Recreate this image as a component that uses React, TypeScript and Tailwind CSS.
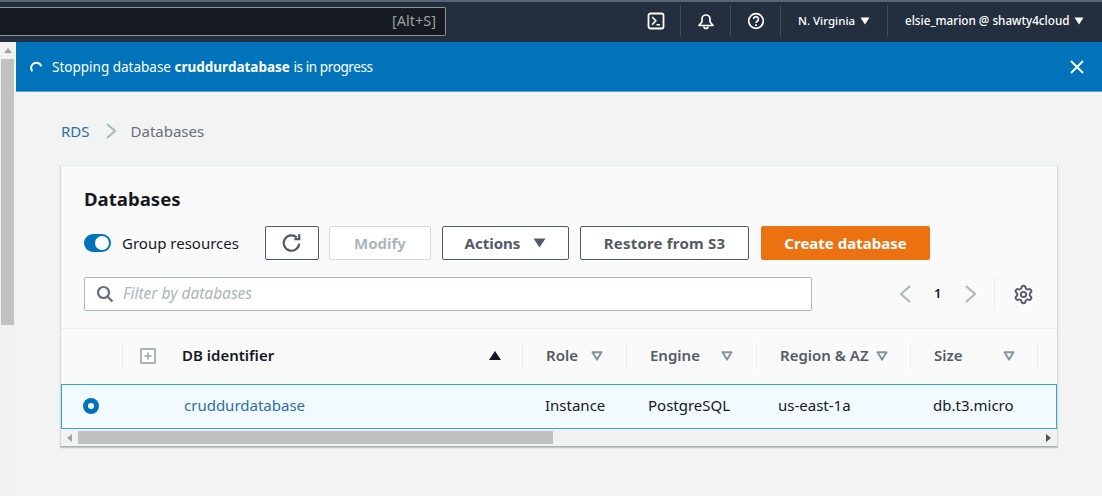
import React from "react";
import { Settings } from "lucide-react";

const font = { fontFamily: '"Noto Sans", "Open Sans", sans-serif' };

function Filter() {
  return (
    <svg width="12" height="10" viewBox="0 0 12 10" className="shrink-0">
      <path d="M1.5 1.2h9L6 8.6z" fill="none" stroke="#879596" strokeWidth="2" strokeLinejoin="round" />
    </svg>
  );
}

function HeaderCell({ label, w, gap }: { label: string; w: string; gap: string }) {
  return (
    <div className={`${w} flex h-[26px] shrink-0 items-center border-l border-[#eaeded] pl-[23px]`}>
      <span className="text-[15px] font-semibold text-[#545b64]">{label}</span>
      <span className={gap}><Filter /></span>
    </div>
  );
}

function Sep() {
  return <div className="h-[32px] w-px bg-[#414d5c]" />;
}

function Caret({ c = "#fff" }: { c?: string }) {
  return (
    <svg width="10" height="8" viewBox="0 0 10 8" className="shrink-0">
      <path d="M0.5 0.5h9L5 7.5z" fill={c} />
    </svg>
  );
}

export default function App() {
  return (
    <div style={font} className="flex h-[496px] w-[1102px] flex-col overflow-hidden bg-[#f2f3f3]">
      {/* top navigation */}
      <header className="flex h-[42px] shrink-0 items-center border-t-2 border-[#596573] bg-[#232f3e] pb-[2px] text-white">
        <div className="flex h-[29px] w-[446px] items-center justify-end rounded-r-[2px] border border-l-0 border-[#8d9696] bg-[#161a22] pr-[9px] text-[14.5px] text-[#9aa3a3]">
          [Alt+S]
        </div>
        <div className="ml-auto flex items-center">
          <svg width="18" height="18" viewBox="0 0 18 18" className="mr-[15px]" fill="none" stroke="#fff" strokeWidth="1.8">
            <rect x="1.5" y="1.5" width="15" height="15" rx="2" />
            <path d="M5.2 5l3.6 3.8-3.6 3.8M9.5 12.8h3.5" strokeWidth="1.6" />
          </svg>
          <Sep />
          <div className="flex w-[49px] justify-center">
            <svg width="20" height="20" viewBox="0 0 20 20" fill="none" stroke="#fff" strokeWidth="1.7">
              <path d="M3 14.5l3-3.8V8a4 4 0 0 1 8 0v2.7l3 3.8z" strokeLinejoin="round" />
              <path d="M8 15.5a2 2 0 0 0 4 0" />
            </svg>
          </div>
          <Sep />
          <div className="flex w-[49px] justify-center">
            <svg width="18" height="18" viewBox="0 0 18 18" fill="none" stroke="#fff" strokeWidth="1.7">
              <circle cx="9" cy="9" r="7.3" />
              <path d="M6.6 7.1a2.4 2.4 0 1 1 3.6 2.1c-.8.5-1.2.9-1.2 1.8" />
              <path d="M9 12.3v1.6" />
            </svg>
          </div>
          <Sep />
          <div className="flex w-[106px] items-center pl-[17px] text-[11.5px] font-medium">
            <span>N. Virginia</span>
            <span className="ml-[5px]"><Caret /></span>
          </div>
          <Sep />
          <div className="flex w-[214px] items-center pl-[17px] text-[11.7px] font-medium whitespace-nowrap">
            <span>elsie_marion @ shawty4cloud</span>
            <span className="ml-[5px]"><Caret /></span>
          </div>
        </div>
      </header>

      <div className="flex min-h-0 flex-1">
        {/* page scrollbar */}
        <div className="flex w-[16px] shrink-0 flex-col bg-[#f1f1f1]">
          <div className="flex h-[17px] items-center justify-center">
            <svg width="8" height="5" viewBox="0 0 8 5"><path d="M0 5l4-5 4 5z" fill="#a3a3a3" /></svg>
          </div>
          <div className="ml-px h-[266px] w-[13px] bg-[#c1c1c1]" />
        </div>

        <main className="min-w-0 flex-1">
          {/* flash */}
          <div className="flex h-[50px] items-center border-b border-[#5d9fcf] bg-[#0073bb] pt-[1px] pl-[14px] pr-[18px] text-white">
            <svg width="13" height="13" viewBox="0 0 13 13" fill="none" stroke="#fff" strokeWidth="2" strokeLinecap="round">
              <path d="M1.8 9.5A5 5 0 0 1 11 4.5" />
            </svg>
            <span className="ml-[9px] text-[13.5px]">
              Stopping database <b className="font-bold">cruddurdatabase</b> <span className="tracking-[-0.4px]">is in progress</span>
            </span>
            <svg width="14" height="14" viewBox="0 0 14 14" className="ml-auto" fill="none" stroke="#fff" strokeWidth="1.9">
              <path d="M1 1l12 12M13 1L1 13" />
            </svg>
          </div>

          {/* breadcrumb */}
          <nav className="mt-[28px] ml-[45px] flex h-[22px] items-center text-[15px]">
            <span className="text-[#2e6ea8]">RDS</span>
            <svg width="12" height="16" viewBox="0 0 12 16" className="mr-[14px] ml-[15px]" fill="none" stroke="#aab7b8" strokeWidth="2">
              <path d="M2 1l8 7-8 7" />
            </svg>
            <span className="text-[#687078]">Databases</span>
          </nav>

          {/* card */}
          <section className="mt-[23px] ml-[44px] w-[998px] border border-t-[#e6e9e9] border-x-[#d5dbdb] border-b-[#a9b2b2] bg-[#fafafa] shadow-[0_1px_1px_rgba(0,28,36,0.2)]">
            <div className="h-[163px] border-b border-[#eaeded] pt-[20px] pl-[23px]">
              <h2 className="text-[18.6px] leading-[26px] font-bold text-[#16191f]">Databases</h2>
              <div className="mt-[14px] flex h-[34px] items-center">
                <div className="flex h-[18px] w-[27px] items-center justify-end rounded-full bg-[#0073bb] pr-[2px]">
                  <div className="size-[14px] rounded-full bg-white" />
                </div>
                <span className="ml-[11px] w-[116px] whitespace-nowrap text-[15px] text-[#16191f]">Group resources</span>
                <button className="ml-[27px] flex h-[34px] w-[54px] items-center justify-center rounded-[2px] border border-[#545b64] bg-white">
                  <svg width="22" height="22" viewBox="0 0 20 20" fill="none" stroke="#545b64" strokeWidth="2">
                    <path d="M16.5 10.5a7 7 0 1 1-2.2-5.6" />
                    <path d="M16.6 2v4.4h-4.4" strokeWidth="2" />
                  </svg>
                </button>
                <button className="ml-[10px] h-[34px] w-[102px] rounded-[2px] border border-[#d5dbdb] bg-white text-[15px] font-bold text-[#aab7b8]">Modify</button>
                <button className="ml-[11px] flex h-[34px] w-[127px] items-center justify-center gap-[13px] rounded-[2px] border border-[#545b64] bg-white text-[15px] font-bold text-[#545b64]">
                  Actions
                  <svg width="13" height="10" viewBox="0 0 13 10"><path d="M0.5 0.5h12L6.5 9.5z" fill="#545b64" /></svg>
                </button>
                <button className="ml-[11px] h-[34px] w-[169px] rounded-[2px] border border-[#545b64] bg-white text-[15px] font-bold tracking-[0.2px] text-[#545b64]">Restore from S3</button>
                <button className="ml-[12px] h-[34px] w-[169px] rounded-[2px] bg-[#ec7211] text-[15px] font-bold text-white">Create database</button>
              </div>
              <div className="mt-[17px] flex h-[34px] items-center">
                <div className="flex h-[34px] w-[728px] items-center rounded-[2px] border border-[#aab7b8] bg-white pl-[11px]">
                  <svg width="18" height="18" viewBox="0 0 18 18" fill="none" stroke="#687078" strokeWidth="2.2">
                    <circle cx="7.5" cy="7.5" r="5.5" />
                    <path d="M11.5 11.5l5 5" />
                  </svg>
                  <span className="ml-[9px] text-[15.5px] text-[#aab7b8] italic">Filter by databases</span>
                </div>
                <svg width="14" height="20" viewBox="0 0 14 20" className="ml-[86px]" fill="none" stroke="#aab7b8" strokeWidth="2">
                  <path d="M12 2L3 10l9 8" />
                </svg>
                <span className="ml-[22px] w-[8px] text-[13px] font-semibold text-[#16191f]">1</span>
                <svg width="14" height="20" viewBox="0 0 14 20" className="ml-[22px]" fill="none" stroke="#aab7b8" strokeWidth="2">
                  <path d="M2 2l9 8-9 8" />
                </svg>
                <div className="ml-[16px] h-[34px] w-px bg-[#eaeded]" />
                <Settings size={21} strokeWidth={2.2} color="#545b64" className="ml-[18px]" />
              </div>
            </div>

            {/* table header */}
            <div className="flex h-[55px] items-center pb-[2px]">
              <div className="w-[61px] shrink-0" />
              <div className="flex h-[26px] w-[400px] shrink-0 items-center border-l border-[#eaeded] pl-[17px]">
                <svg width="16" height="16" viewBox="0 0 16 16" fill="none">
                  <rect x="1" y="1" width="14" height="14" fill="#fff" stroke="#aab7b8" strokeWidth="2" />
                  <path d="M8 4.5v7M4.5 8h7" stroke="#aab7b8" strokeWidth="2" />
                </svg>
                <span className="ml-[26px] w-[94px] whitespace-nowrap text-[15px] font-semibold text-[#16191f]">DB identifier</span>
                <svg width="12" height="9" viewBox="0 0 12 9" className="ml-[213px]"><path d="M6 0l6 9H0z" fill="#16191f" /></svg>
              </div>
              <HeaderCell label="Role" w="w-[104px]" gap="ml-[13px]" />
              <HeaderCell label="Engine" w="w-[130px]" gap="ml-[21px]" />
              <HeaderCell label="Region & AZ" w="w-[154px]" gap="ml-[7px]" />
              <HeaderCell label="Size" w="w-[127px]" gap="ml-[40px]" />
              <div className="h-[26px] flex-1 border-l border-[#eaeded]" />
            </div>

            {/* selected row */}
            <div className="flex h-[45px] items-center border border-[#3aa3c9] bg-[#f1faff] pb-[2px] text-[15px] text-[#16191f]">
              <div className="flex w-[60px] shrink-0 pl-[21px]">
                <div className="flex size-[16px] items-center justify-center rounded-full bg-[#0073bb]">
                  <div className="size-[6px] rounded-full bg-white" />
                </div>
              </div>
              <div className="w-[400px] shrink-0 pl-[62px] text-[#2e6ea8]">cruddurdatabase</div>
              <div className="w-[104px] shrink-0 pl-[23px]">Instance</div>
              <div className="w-[130px] shrink-0 pl-[22px]">PostgreSQL</div>
              <div className="w-[154px] shrink-0 pl-[22px]">us-east-1a</div>
              <div className="pl-[23px]">db.t3.micro</div>
            </div>

            {/* horizontal scrollbar */}
            <div className="flex h-[17px] items-center bg-[#f1f1f1]">
              <div className="flex w-[17px] shrink-0 justify-center">
                <svg width="5" height="8" viewBox="0 0 5 8"><path d="M5 0L0 4l5 4z" fill="#a3a3a3" /></svg>
              </div>
              <div className="h-[13px] w-[475px] bg-[#c1c1c1]" />
              <div className="ml-auto flex w-[17px] justify-center">
                <svg width="5" height="8" viewBox="0 0 5 8"><path d="M0 0l5 4-5 4z" fill="#505050" /></svg>
              </div>
            </div>
          </section>
        </main>
      </div>
    </div>
  );
}
